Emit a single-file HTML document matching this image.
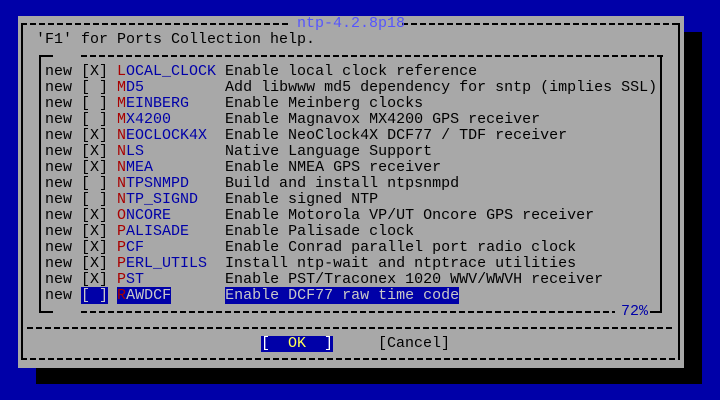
<!DOCTYPE html>
<html><head><meta charset="utf-8"><style>
*{margin:0;padding:0;box-sizing:border-box}
body{width:720px;height:400px;background:#0000a8;position:relative;overflow:hidden;font-family:"Liberation Mono",monospace;font-size:15px;line-height:16px}
.a{position:absolute}
.t{position:absolute;white-space:pre;height:16px;color:#000}
.h{position:absolute;height:2px;background:repeating-linear-gradient(90deg,#000 0 6px,transparent 6px 9px)}
.v{position:absolute;width:2px;background:#000}
.b{color:#0000a8}.r{color:#a80000}
.s{background:#0000a8;color:#c8c8c8}
</style></head><body>
<div class="a" style="left:36px;top:32px;width:666px;height:352px;background:#000"></div>
<div class="a" style="left:18px;top:16px;width:666px;height:352px;background:#a8a8a8"></div>
<!-- outer border -->
<div class="h" style="left:21px;top:23px;width:270px"></div>
<div class="h" style="left:402px;top:23px;width:279px"></div>
<div class="v" style="left:21px;top:23px;height:337px"></div>
<div class="v" style="left:678px;top:23px;height:337px"></div>
<div class="h" style="left:21px;top:358px;width:659px"></div>
<div class="h" style="left:27px;top:327px;width:647px"></div>
<div class="t" style="left:297px;top:16px;color:#5555ff">ntp-4.2.8p18</div>
<div class="t" style="left:36px;top:32px">'F1' for Ports Collection help.</div>
<!-- inner list box -->
<div class="h" style="left:39px;top:55px;width:14px;background:#000"></div>
<div class="h" style="left:81px;top:55px;width:582px"></div>
<div class="v" style="left:39px;top:55px;height:258px"></div>
<div class="v" style="left:660px;top:55px;height:258px"></div>
<div class="h" style="left:39px;top:311px;width:14px;background:#000"></div>
<div class="h" style="left:81px;top:311px;width:534px"></div>
<div class="h" style="left:650px;top:311px;width:12px;background:#000"></div>
<div class="t b" style="left:621px;top:304px">72%</div>

<div class="t" style="left:45px;top:64px">new [X] <span class="r">L</span><span class="b">OCAL_CLOCK</span> Enable local clock reference</div>
<div class="t" style="left:45px;top:80px">new [ ] <span class="r">M</span><span class="b">D5</span>         Add libwww md5 dependency for sntp (implies SSL)</div>
<div class="t" style="left:45px;top:96px">new [ ] <span class="r">M</span><span class="b">EINBERG</span>    Enable Meinberg clocks</div>
<div class="t" style="left:45px;top:112px">new [ ] <span class="r">M</span><span class="b">X4200</span>      Enable Magnavox MX4200 GPS receiver</div>
<div class="t" style="left:45px;top:128px">new [X] <span class="r">N</span><span class="b">EOCLOCK4X</span>  Enable NeoClock4X DCF77 / TDF receiver</div>
<div class="t" style="left:45px;top:144px">new [X] <span class="r">N</span><span class="b">LS</span>         Native Language Support</div>
<div class="t" style="left:45px;top:160px">new [X] <span class="r">N</span><span class="b">MEA</span>        Enable NMEA GPS receiver</div>
<div class="t" style="left:45px;top:176px">new [ ] <span class="r">N</span><span class="b">TPSNMPD</span>    Build and install ntpsnmpd</div>
<div class="t" style="left:45px;top:192px">new [ ] <span class="r">N</span><span class="b">TP_SIGND</span>   Enable signed NTP</div>
<div class="t" style="left:45px;top:208px">new [X] <span class="r">O</span><span class="b">NCORE</span>      Enable Motorola VP/UT Oncore GPS receiver</div>
<div class="t" style="left:45px;top:224px">new [X] <span class="r">P</span><span class="b">ALISADE</span>    Enable Palisade clock</div>
<div class="t" style="left:45px;top:240px">new [X] <span class="r">P</span><span class="b">CF</span>         Enable Conrad parallel port radio clock</div>
<div class="t" style="left:45px;top:256px">new [X] <span class="r">P</span><span class="b">ERL_UTILS</span>  Install ntp-wait and ntptrace utilities</div>
<div class="t" style="left:45px;top:272px">new [X] <span class="r">P</span><span class="b">ST</span>         Enable PST/Traconex 1020 WWV/WWVH receiver</div>
<div class="t" style="left:45px;top:288px">new <span class="s">[ ]</span> <span class="s"><span class="r" style="color:#a80000">R</span>AWDCF</span>      <span class="s">Enable DCF77 raw time code</span></div>

<div class="t" style="left:261px;top:336px;background:#0000a8;color:#fff">[  <span style="color:#ffff55">OK</span>  ]</div>
<div class="t" style="left:378px;top:336px">[Cancel]</div>
</body></html>
